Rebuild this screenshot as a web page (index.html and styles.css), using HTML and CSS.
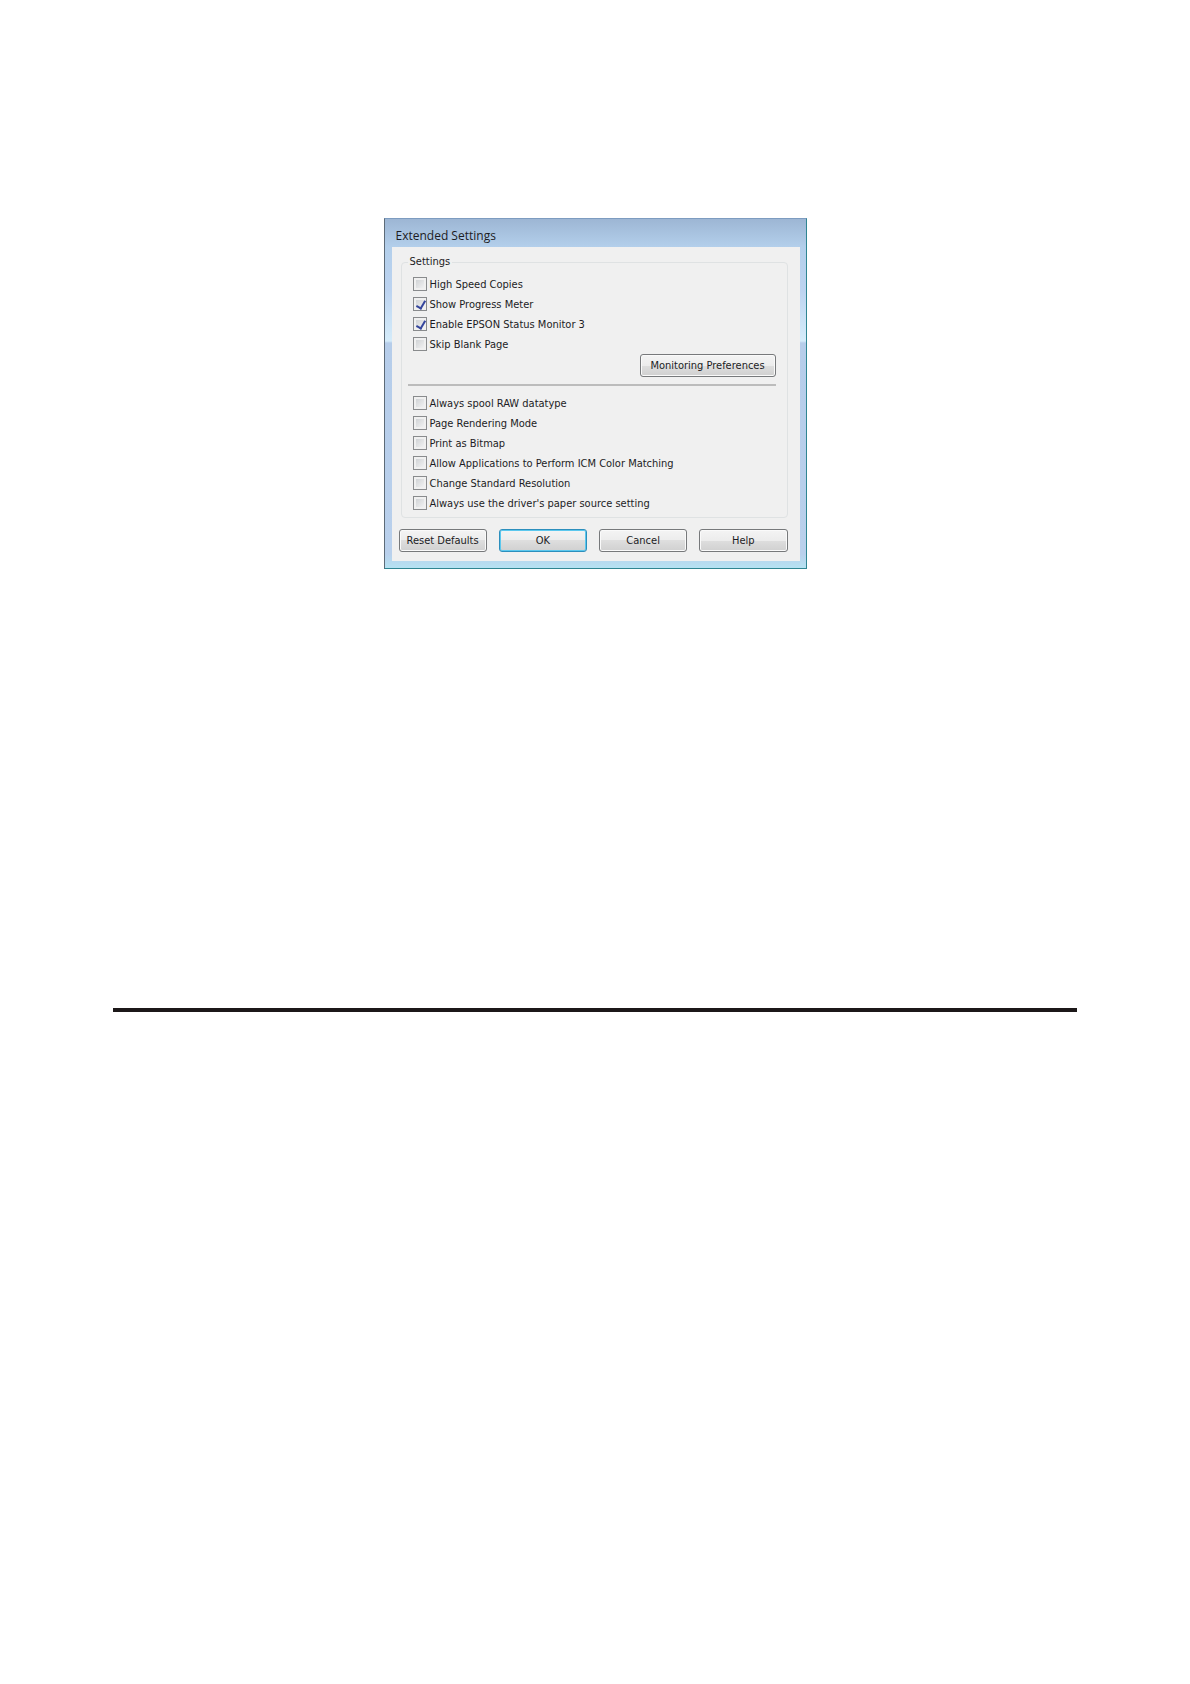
FILE: index.html
```html
<!DOCTYPE html>
<html lang="en">
<head>
    <meta charset="UTF-8" />
    <meta name="viewport" content="width=device-width, initial-scale=1.0" />
    <title>Extended Settings</title>
    <link rel="stylesheet" href="styles.css">
</head>
<body>
    <main class="page">
        <form class="window">
            <h1 class="titlebar">Extended Settings</h1>
            <div class="client">
                <fieldset class="settings">
                    <legend>Settings</legend>
                    <div class="options">
                        <label class="option"><input type="checkbox" name="highSpeed"> High Speed Copies</label>
                        <label class="option"><input type="checkbox" name="progress" checked> Show Progress Meter</label>
                        <label class="option"><input type="checkbox" name="monitor" checked> Enable EPSON Status Monitor 3</label>
                        <label class="option"><input type="checkbox" name="skipBlank"> Skip Blank Page</label>
                    </div>
                    <div class="monitoring">
                        <button type="button">Monitoring Preferences</button>
                    </div>
                    <div class="options">
                        <label class="option"><input type="checkbox" name="raw"> Always spool RAW datatype</label>
                        <label class="option"><input type="checkbox" name="rendering"> Page Rendering Mode</label>
                        <label class="option"><input type="checkbox" name="bitmap"> Print as Bitmap</label>
                        <label class="option"><input type="checkbox" name="icm"> Allow Applications to Perform ICM Color Matching</label>
                        <label class="option"><input type="checkbox" name="resolution"> Change Standard Resolution</label>
                        <label class="option"><input type="checkbox" name="paperSource"> Always use the driver's paper source setting</label>
                    </div>
                </fieldset>
                <div class="buttons">
                    <button type="reset">Reset Defaults</button>
                    <button type="button" class="default">OK</button>
                    <button type="button">Cancel</button>
                    <button type="button">Help</button>
                </div>
            </div>
        </form>
        <hr class="rule">
    </main>
</body>
</html>
```
FILE: styles.css
```css
* {
  box-sizing: border-box;
}
body {
  margin: 0;
  background-color: #fff;
  color: #1c1c24;
  font-family: "DejaVu Sans Condensed", "Open Sans", sans-serif;
  font-size: 11px;
}
.page {
  padding: 218px 113px 0;
}

/* Window frame */
.window {
  max-width: 423px;
  margin: 0 auto;
  padding: 0 6px 7px 7px;
  border: 1px solid #2f8592;
  border-top-color: #7d9cc0;
  border-left-color: #5d6b78;
  background: linear-gradient(#9db6d4, #b3cfeb 28px, #bcd3f0 70px, #d5ecfa 122px, #b6cdea 124px, #b9d0ec 335px, #b5e2f2);
}
.titlebar {
  margin: 0;
  padding: 3px 4px 0;
  height: 28px;
  font-family: "Open Sans", sans-serif;
  font-size: 12px;
  font-weight: normal;
  line-height: 28px;
}
.client {
  padding: 6px 12px 9px 7px;
  background-color: #f0f0f0;
}

/* Settings group */
.settings {
  margin: 0 0 11px 2px;
  padding: 3px 11px 4px 6px;
  border: 1px solid #dfe2e3;
  border-radius: 4px;
}
.settings legend {
  padding: 0 2px;
  line-height: 18px;
}
.options {
  padding-left: 5px;
}
.option {
  display: flex;
  align-items: center;
  gap: 3px;
  height: 20px;
  white-space: nowrap;
}
.option input {
  appearance: none;
  flex: none;
  width: 14px;
  height: 14px;
  margin: 0;
  border: 1px solid #898b8d;
  background: linear-gradient(135deg, #c9cccf, #f8f8f8);
  box-shadow: inset 0 0 0 2px #f0f0f0;
}
.option input:checked {
  position: relative;
}
.option input:checked::after {
  content: "";
  position: absolute;
  left: 4px;
  top: 1px;
  width: 4px;
  height: 8px;
  border: solid #35469c;
  border-width: 0 2px 2px 0;
  transform: rotate(30deg);
}
.monitoring {
  display: flex;
  justify-content: flex-end;
  padding-bottom: 7px;
  margin-bottom: 7px;
  border-bottom: 2px solid #bcbcbc;
}
.monitoring button {
  width: 136px;
}

/* Buttons */
button {
  height: 23px;
  padding: 0;
  border: 1px solid #77797b;
  border-radius: 3px;
  background: linear-gradient(#f4f4f4, #ececec 50%, #dedede 50%, #d0d0d0);
  box-shadow: inset 0 0 0 1px #fafafa;
  color: inherit;
  font: inherit;
  line-height: 20px;
  white-space: nowrap;
}
.buttons {
  display: flex;
  gap: 12px;
}
.buttons button {
  flex: 1;
}
button.default {
  border-color: #2c8fbd;
  box-shadow: inset 0 0 0 1px #5cc8ee;
}

.rule {
  height: 4px;
  margin: 439px 0 0;
  border: 0;
  background-color: #1c1819;
}
```
